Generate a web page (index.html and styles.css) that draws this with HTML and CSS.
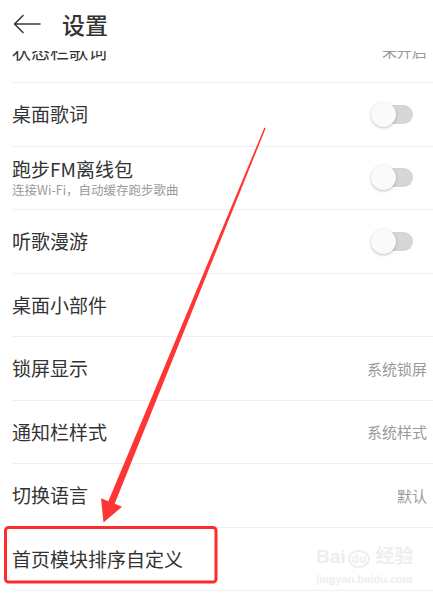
FILE: index.html
```html
<!DOCTYPE html>
<html lang="zh-CN">
<head>
  <meta charset="UTF-8">
  <meta name="viewport" content="width=device-width, initial-scale=1.0">
  <title>设置</title>
  <link rel="stylesheet" href="styles.css">
</head>
<body>
  <div class="screen">
    <header class="topbar">
      <svg class="back-icon" width="28" height="20" viewBox="0 0 28 20">
        <path d="M27 10H2M10 1.5L1.5 10L10 18.5" fill="none" stroke="#3a3a3a" stroke-width="1.6" stroke-linecap="round" stroke-linejoin="round"/>
      </svg>
      <h1 class="title">设置</h1>
    </header>

    <div class="viewport">
      <ul class="settings">
        <li class="row">
          <span class="label">状态栏歌词</span>
          <span class="value">未开启</span>
        </li>
        <li class="row">
          <span class="label">桌面歌词</span>
          <span class="switch"><span class="track"></span><span class="knob"></span></span>
        </li>
        <li class="row">
          <div class="label-group">
            <span class="label">跑步FM离线包</span>
            <span class="hint">连接Wi-Fi，自动缓存跑步歌曲</span>
          </div>
          <span class="switch"><span class="track"></span><span class="knob"></span></span>
        </li>
        <li class="row">
          <span class="label">听歌漫游</span>
          <span class="switch"><span class="track"></span><span class="knob"></span></span>
        </li>
        <li class="row">
          <span class="label">桌面小部件</span>
        </li>
        <li class="row">
          <span class="label">锁屏显示</span>
          <span class="value">系统锁屏</span>
        </li>
        <li class="row">
          <span class="label">通知栏样式</span>
          <span class="value">系统样式</span>
        </li>
        <li class="row">
          <span class="label">切换语言</span>
          <span class="value">默认</span>
        </li>
        <li class="row">
          <span class="label">首页模块排序自定义</span>
        </li>
      </ul>
    </div>

    <!-- annotation drawn over the screenshot -->
    <svg class="markup" width="433" height="597" viewBox="0 0 433 597">
      <polygon points="264.4,127.6 265.6,128.4 114.7,503.8 122,506.8 103.5,522.5 101,498.2 108.3,501.2" fill="#ff3535"/>
      <rect x="5.5" y="527.5" width="210.5" height="54.5" rx="3" fill="none" stroke="#ff2b2b" stroke-width="3"/>
    </svg>

    <div class="watermark">
      <div class="wm-logo">Bai<span class="wm-du">du</span> 经验</div>
      <div class="wm-url">jingyan.baidu.com</div>
    </div>
  </div>
</body>
</html>
```

FILE: styles.css
```css
body {
  margin: 0;
  background-color: #ffffff;
  font-family: "Noto Sans CJK SC", "Noto Sans", sans-serif;
  color: #333;
}
.screen {
  position: relative;
  width: 433px;
  height: 597px;
  overflow: hidden;
  display: flex;
  flex-direction: column;
}
.topbar {
  height: 51px;
  flex-shrink: 0;
  display: flex;
  align-items: center;
  padding-left: 13px;
  background-color: #ffffff;
}
.back-icon {
  margin-top: -3px;
}
.title {
  margin: -2px 0 0 21px;
  font-size: 23px;
  font-weight: 500;
  color: #333;
  line-height: 1;
}
.viewport {
  flex: 1;
  overflow: hidden;
}
.settings {
  list-style: none;
  margin: -31.5px 0 0 12px;
  padding: 0;
}
.row {
  height: 62.5px;
  border-bottom: 1px solid #f0f0f0;
  display: flex;
  align-items: center;
  justify-content: space-between;
  padding-right: 6px;
}
.label {
  font-size: 19px;
  line-height: 24px;
  color: #333;
}
.label-group {
  display: flex;
  flex-direction: column;
}
.hint {
  font-size: 12.5px;
  line-height: 18px;
  color: #9a9a9a;
}
.value {
  font-size: 15px;
  color: #9a9a9a;
}
.switch {
  display: grid;
  align-items: center;
  width: 42px;
  height: 25px;
  margin-right: 14px;
}
.track,
.knob {
  grid-area: 1 / 1;
}
.track {
  justify-self: end;
  width: 36px;
  height: 19px;
  border-radius: 10px;
  background-color: #d6d6d6;
}
.knob {
  justify-self: start;
  width: 25px;
  height: 25px;
  border-radius: 50%;
  background-color: #fafafa;
  box-shadow: 0 1px 3px rgba(0, 0, 0, 0.25);
}
.markup {
  position: absolute;
  top: 0;
  left: 0;
  pointer-events: none;
}
.watermark {
  position: absolute;
  left: 316px;
  top: 545px;
  color: #eeeeee;
  font-family: "Liberation Sans", "Noto Sans CJK SC", sans-serif;
  pointer-events: none;
}
.wm-logo {
  font-size: 19px;
  font-weight: bold;
  line-height: 24px;
  white-space: nowrap;
}
.wm-du {
  font-size: 12px;
  border: 2px solid #eeeeee;
  border-radius: 50%;
  padding: 0 2px;
  margin-left: 2px;
}
.wm-url {
  font-size: 11px;
  line-height: 16px;
  font-weight: bold;
}
```
